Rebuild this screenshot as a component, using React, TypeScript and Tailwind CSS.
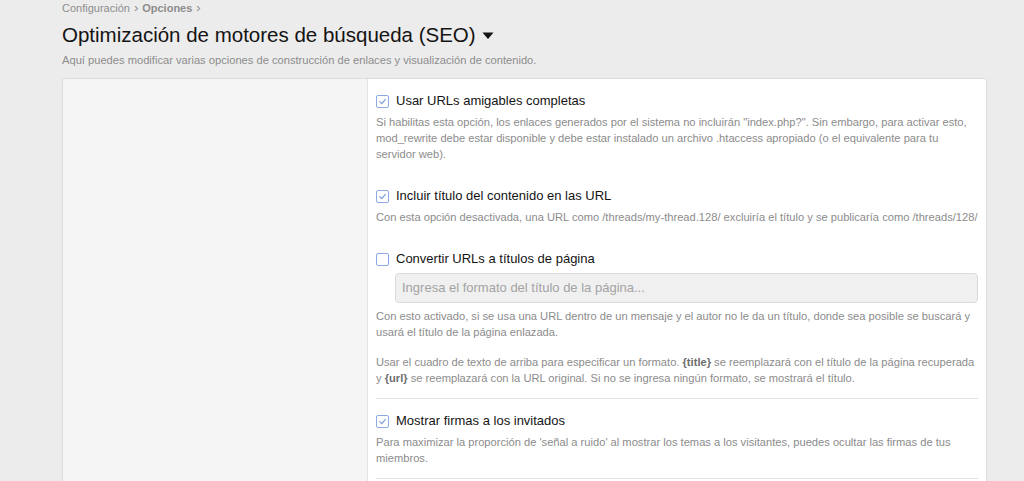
import React from "react";

function Check({ checked }: { checked: boolean }) {
  return (
    <span className="relative mt-[4px] inline-flex h-[13px] w-[13px] shrink-0 items-center justify-center rounded-[2px] border border-[#8eaae6] bg-white">
      {checked && (
        <svg width="9" height="9" viewBox="0 0 10 10" fill="none">
          <path d="M2 5.2 L4.2 7.4 L8.2 2.6" stroke="#7a9be0" strokeWidth="1.3" strokeLinecap="round" strokeLinejoin="round" />
        </svg>
      )}
    </span>
  );
}

function Row({
  checked,
  label,
  children,
}: {
  checked: boolean;
  label: string;
  children?: React.ReactNode;
}) {
  return (
    <div className="py-[12px]">
      <div className="flex items-start gap-[7px]">
        <Check checked={checked} />
        <span className="text-[13px] leading-[20px] text-[#141414]">{label}</span>
      </div>
      {children}
    </div>
  );
}

export default function App() {
  return (
    <div
      className="min-h-[481px] bg-[#ececec] pl-[62px] pr-[37px] pt-[1px]"
      style={{ fontFamily: '"Liberation Sans", Arial, sans-serif' }}
    >
      <div className="flex items-center gap-[4px] text-[11px] leading-[14px] text-[#8c8c8c]">
        <span>Configuración</span>
        <span className="text-[13px]">›</span>
        <span className="font-bold">Opciones</span>
        <span className="text-[13px]">›</span>
      </div>
      <div className="mt-[7px] flex items-center gap-[6px]">
        <h1 className="text-[20.5px] leading-[26px] text-[#141414]">
          Optimización de motores de búsqueda (SEO)
        </h1>
        <svg width="12" height="8" viewBox="0 0 12 8" className="mt-[2px]">
          <path d="M0.5 0.5 L11.5 0.5 L6 7 Z" fill="#141414" />
        </svg>
      </div>
      <p className="mt-[5px] text-[11.15px] leading-[14px] text-[#8c8c8c]">
        Aquí puedes modificar varias opciones de construcción de enlaces y visualización de contenido.
      </p>
      <div className="mt-[11px] flex h-[420px] overflow-hidden rounded-t-[3px] border border-b-0 border-[#dcdcdc]">
        <div className="w-[305px] shrink-0 border-r border-[#e2e2e2] bg-[#f5f5f5]" />
        <div className="flex-1 bg-white pl-[8px] pr-[8px] text-[11.15px]">
          <Row checked label="Usar URLs amigables completas">
            <p className="mt-[3px] leading-[16px] text-[#8c8c8c]">
              Si habilitas esta opción, los enlaces generados por el sistema no incluirán "index.php?". Sin embargo, para activar esto, mod_rewrite debe estar disponible y debe estar instalado un archivo .htaccess apropiado (o el equivalente para tu servidor web).
            </p>
          </Row>
          <Row checked label="Incluir título del contenido en las URL">
            <p className="mt-[3px] leading-[16px] text-[#8c8c8c]">
              Con esta opción desactivada, una URL como /threads/my-thread.128/ excluiría el título y se publicaría como /threads/128/
            </p>
          </Row>
          <div className="border-b border-[#e2e2e2]">
            <Row checked={false} label="Convertir URLs a títulos de página">
              <div className="ml-[19px] mt-[4px] flex h-[30px] items-center rounded-[4px] border border-[#dadada] bg-[#f0f0f0] px-[6px] text-[13px] text-[#a3a3a3]">
                Ingresa el formato del título de la página...
              </div>
              <p className="mt-[5px] leading-[16px] text-[#8c8c8c]">
                Con esto activado, si se usa una URL dentro de un mensaje y el autor no le da un título, donde sea posible se buscará y usará el título de la página enlazada.
              </p>
              <p className="mt-[14px] leading-[16px] text-[#8c8c8c]">
                Usar el cuadro de texto de arriba para especificar un formato. <b className="text-[#6e6e6e]">{"{title}"}</b> se reemplazará con el título de la página recuperada y <b className="text-[#6e6e6e]">{"{url}"}</b> se reemplazará con la URL original. Si no se ingresa ningún formato, se mostrará el título.
              </p>
            </Row>
          </div>
          <div className="border-b border-[#e2e2e2]">
            <Row checked label="Mostrar firmas a los invitados">
              <p className="mt-[3px] leading-[16px] text-[#8c8c8c]">
                Para maximizar la proporción de 'señal a ruido' al mostrar los temas a los visitantes, puedes ocultar las firmas de tus miembros.
              </p>
            </Row>
          </div>
        </div>
      </div>
    </div>
  );
}
